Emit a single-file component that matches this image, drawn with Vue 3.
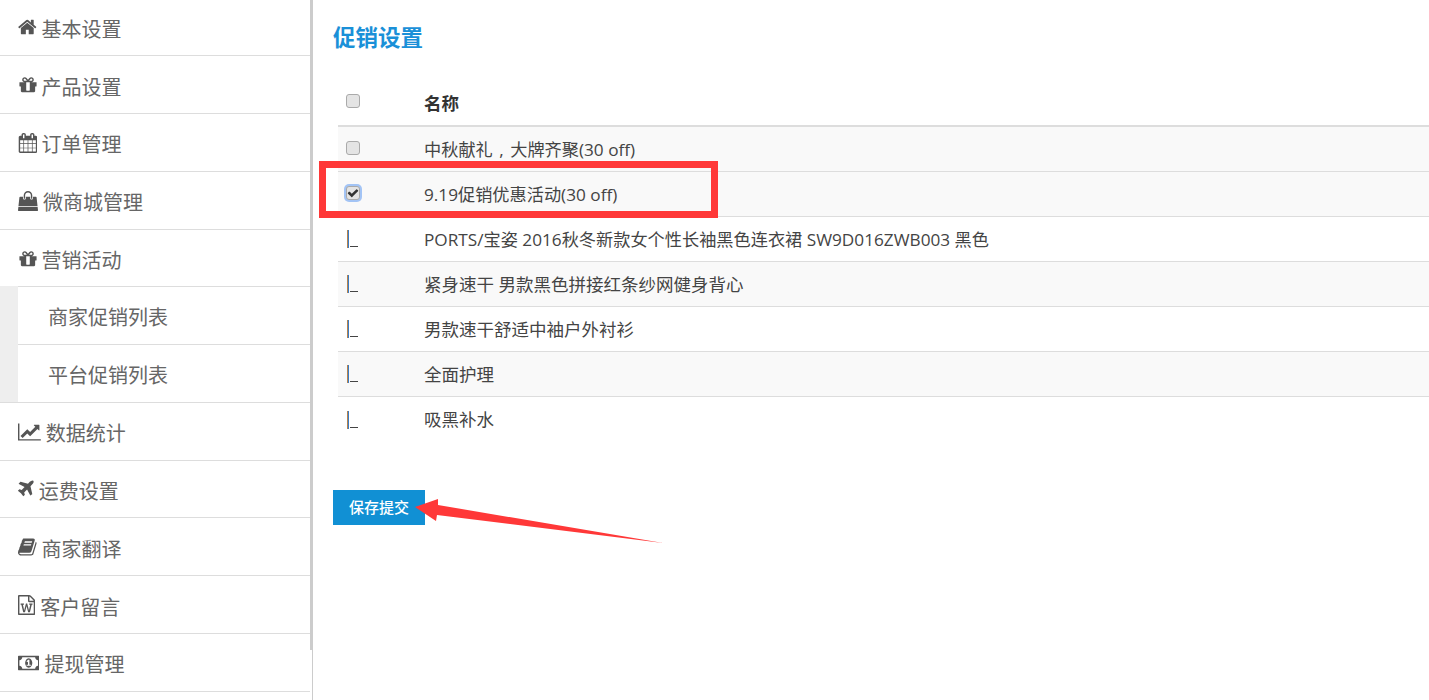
<template>
  <div class="page">
    <aside class="side">
      <div class="thumb"></div>
      <ul class="menu">
        <template v-for="item in menu" :key="item.name">
          <li class="row" :class="{ open: item.subs }">
            <svg class="ico" :width="item.w * 20 / 1792" height="20" :viewBox="`${item.x || 0} 0 ${item.w} 1792`" fill="currentColor"><path :d="icons[item.icon]" /></svg>
            <span class="label">{{ item.name }}</span>
          </li>
          <li v-if="item.subs" class="subs">
            <div v-for="s in item.subs" :key="s" class="sub">{{ s }}</div>
          </li>
        </template>
      </ul>
    </aside>

    <main class="main">
      <h3 class="title">促销设置</h3>
      <div class="table">
        <div class="thead">
          <div class="c1"><span class="box"></span></div>
          <div class="c2">名称</div>
        </div>
        <div v-for="r in rows" :key="r.name" class="tr" :class="{ odd: r.shade, han: r.han }">
          <div class="c1">
            <span v-if="r.type === 'box'" class="box"></span>
            <span v-else-if="r.type === 'checked'" class="box on">
              <svg width="12" height="12" viewBox="0 0 1792 1792" fill="#333"><path d="M1671 566q0 40-28 68l-724 724-136 136q-28 28-68 28t-68-28l-136-136-362-362q-28-28-28-68t28-68l136-136q28-28 68-28t68 28l294 295 656-657q28-28 68-28t68 28l136 136q28 28 28 68z" /></svg>
            </span>
            <span v-else class="broken"></span>
          </div>
          <div class="c2">{{ r.name }}<template v-if="r.tail"><span class="comma">,</span>{{ r.tail }}</template></div>
        </div>
      </div>
      <button class="save">保存提交</button>
    </main>

    <div class="mark"></div>
    <svg class="arrow" width="260" height="60" viewBox="0 0 260 60">
      <polygon points="2,17 25,9 25,15 250,53 24,25 23,31" fill="#ff3838" />
    </svg>
  </div>
</template>

<script setup>
const icons = {
  home: 'M1472 992v480q0 26-19 45t-45 19h-384v-384h-256v384h-384q-26 0-45-19t-19-45v-480q0-1 .5-3t.5-3l575-474 575 474q1 2 1 6zm223-69l-62 74q-8 9-21 11h-3q-13 0-21-7l-692-577-692 577q-12 8-24 7-13-2-21-11l-62-74q-8-10-7-23.5t11-21.5l719-599q32-26 76-26t76 26l244 204v-195q0-14 9-23t23-9h192q14 0 23 9t9 23v408l219 182q10 8 11 21.5t-7 23.5z',
  gift: 'M1056 1356v-716h-320v716q0 25 18 38.5t46 13.5h192q28 0 46-13.5t18-38.5zm-456-844h195l-126-161q-26-31-69-31-40 0-68 28t-28 68 28 68 68 28zm688-96q0-40-28-68t-68-28q-43 0-69 31l-125 161h194q40 0 68-28t28-68zm376 256v320q0 14-9 23t-23 9h-96v416q0 40-28 68t-68 28h-1088q-40 0-68-28t-28-68v-416h-96q-14 0-23-9t-9-23v-320q0-14 9-23t23-9h440q-93 0-158.5-65.5t-65.5-158.5 65.5-158.5 158.5-65.5q107 0 168 77l128 165 128-165q61-77 168-77 93 0 158.5 65.5t65.5 158.5-65.5 158.5-158.5 65.5h440q14 0 23 9t9 23z',
  calendar: 'M192 1664h288v-288h-288v288zm352 0h320v-288h-320v288zm-352-352h288v-320h-288v320zm352 0h320v-320h-320v320zm-352-384h288v-288h-288v288zm736 736h320v-288h-320v288zm-384-736h320v-288h-320v288zm768 736h288v-288h-288v288zm-384-352h320v-320h-320v320zm-352-864v-288q0-13-9.5-22.5t-22.5-9.5h-64q-13 0-22.5 9.5t-9.5 22.5v288q0 13 9.5 22.5t22.5 9.5h64q13 0 22.5-9.5t9.5-22.5zm736 864h288v-320h-288v320zm-384-384h320v-288h-320v288zm384 0h288v-288h-288v288zm32-480v-288q0-13-9.5-22.5t-22.5-9.5h-64q-13 0-22.5 9.5t-9.5 22.5v288q0 13 9.5 22.5t22.5 9.5h64q13 0 22.5-9.5t9.5-22.5zm384-64v1280q0 52-38 90t-90 38h-1408q-52 0-90-38t-38-90v-1280q0-52 38-90t90-38h128v-96q0-66 47-113t113-47h64q66 0 113 47t47 113v96h384v-96q0-66 47-113t113-47h64q66 0 113 47t47 113v96h128q52 0 90 38t38 90z',
  bag: 'M1757 1408l35 313q3 28-16 50-19 21-48 21h-1664q-29 0-48-21-19-22-16-50l35-313h1722zm-93-839l86 775h-1708l86-775q3-24 21-40.5t43-16.5h256v128q0 53 37.5 90.5t90.5 37.5 90.5-37.5 37.5-90.5v-128h384v128q0 53 37.5 90.5t90.5 37.5 90.5-37.5 37.5-90.5v-128h256q25 0 43 16.5t21 40.5zm-384-185v256q0 26-19 45t-45 19-45-19-19-45v-256q0-106-75-181t-181-75-181 75-75 181v256q0 26-19 45t-45 19-45-19-19-45v-256q0-159 112.5-271.5t271.5-112.5 271.5 112.5 112.5 271.5z',
  chart: 'M2048 1536v128h-2048v-1536h128v1408h1920zm-128-1248v435q0 21-19.5 29.5t-35.5-7.5l-121-121-633 633q-10 10-23 10t-23-10l-233-233-416 416-192-192 585-585q10-10 23-10t23 10l233 233 464-464-121-121q-16-16-7.5-35.5t29.5-19.5h435q14 0 23 9t9 23z',
  plane: 'M1376 160q44 52 12 148t-108 172l-161 161 160 696q5 19-12 33l-128 96q-7 6-19 6-4 0-7-1-15-3-21-16l-279-508-259 259 53 194q5 17-8 31l-96 96q-9 9-23 9h-2q-15-2-24-13l-189-252-252-189q-11-7-13-23-1-13 9-25l96-97q9-9 23-9 6 0 8 1l194 53 259-259-508-279q-14-8-17-24-2-16 9-27l128-128q14-13 30-8l665 159 160-160q76-76 172-108t148 12z',
  book: 'M1639 478q40 57 18 129l-275 906q-19 64-76.5 107.5t-122.5 43.5h-923q-77 0-148.5-53.5t-99.5-131.5q-24-67-2-127 0-4 3-27t4-37q1-8-3-21.5t-3-19.5q2-11 8-21t16.5-23.5 16.5-23.5q23-38 45-91.5t30-91.5q3-10 .5-30t-.5-28q3-11 17-28t17-23q21-36 42-92t25-90q1-9-2.5-32t.5-28q4-13 22-30.5t22-22.5q19-26 42.5-84.5t27.5-96.5q1-8-3-25.5t-2-26.5q2-8 9-18t18-23 17-21q8-12 16.5-30.5t15-35 16-36 19.5-32 26.5-23.5 36-11.5 47.5 5.5l-1 3q38-9 51-9h761q74 0 114 56t18 130l-274 906q-36 119-71.5 153.5t-128.5 34.5h-869q-27 0-38 15-11 16-1 43 24 70 144 70h923q29 0 56-15.5t35-41.5l300-987q7-22 5-57 38 15 59 43zm-1064 2q-4 13 2 22.5t20 9.5h608q13 0 25.5-9.5t16.5-22.5l21-64q4-13-2-22.5t-20-9.5h-608q-13 0-25.5 9.5t-16.5 22.5zm-83 256q-4 13 2 22.5t20 9.5h608q13 0 25.5-9.5t16.5-22.5l21-64q4-13-2-22.5t-20-9.5h-608q-13 0-25.5 9.5t-16.5 22.5z',
  word: 'M1468 380q28 28 48 76t20 88v1152q0 40-28 68t-68 28h-1344q-40 0-68-28t-28-68v-1600q0-40 28-68t68-28h896q40 0 88 20t76 48zm-444-244v376h376q-10-29-22-41l-313-313q-12-12-41-22zm384 1528v-1024h-416q-40 0-68-28t-28-68v-416h-768v1536h1280zm-1175-896v107h70l164 661h159l128-485q7-20 10-46 2-16 2-24h4l3 24q1 3 3.5 20t5.5 26l128 485h159l164-661h70v-107h-300v107h90l-99 438q-5 20-7 46l-2 21h-4q0-3-.5-6.5t-1.5-8-1-6.5q-1-5-4-21t-5-25l-144-545h-114l-144 545q-2 9-4.5 24.5t-3.5 21.5l-4 21h-4l-2-21q-2-26-7-46l-99-438h90v-107h-300z',
  money: 'M768 1152h384v-96h-128v-448h-114l-148 137 77 80q42-37 55-57h2v288h-128v96zm512-256q0 70-21 142t-59.5 134-101.5 101-138 39-138-39-101.5-101-59.5-134-21-142 21-142 59.5-134 101.5-101 138-39 138 39 101.5 101 59.5 134 21 142zm512 256v-512q-106 0-181-75t-75-181h-1152q0 106-75 181t-181 75v512q106 0 181 75t75 181h1152q0-106 75-181t181-75zm128-832v1152q0 26-19 45t-45 19h-1792q-26 0-45-19t-19-45v-1152q0-26 19-45t45-19h1792q26 0 45 19t19 45z'
}

const menu = [
  { name: '基本设置', icon: 'home', w: 1664, x: 64 },
  { name: '产品设置', icon: 'gift', w: 1664 },
  { name: '订单管理', icon: 'calendar', w: 1664 },
  { name: '微商城管理', icon: 'bag', w: 1792 },
  { name: '营销活动', icon: 'gift', w: 1664, subs: ['商家促销列表', '平台促销列表'] },
  { name: '数据统计', icon: 'chart', w: 2048 },
  { name: '运费设置', icon: 'plane', w: 1408 },
  { name: '商家翻译', icon: 'book', w: 1664 },
  { name: '客户留言', icon: 'word', w: 1536 },
  { name: '提现管理', icon: 'money', w: 1920 }
]

const rows = [
  { name: '中秋献礼', tail: '大牌齐聚(30 off)', type: 'box', shade: true },
  { name: '9.19促销优惠活动(30 off)', type: 'checked', shade: true },
  { name: 'PORTS/宝姿 2016秋冬新款女个性长袖黑色连衣裙 SW9D016ZWB003 黑色', type: 'broken' },
  { name: '紧身速干 男款黑色拼接红条纱网健身背心', type: 'broken', shade: true, han: true },
  { name: '男款速干舒适中袖户外衬衫', type: 'broken', han: true },
  { name: '全面护理', type: 'broken', shade: true, han: true },
  { name: '吸黑补水', type: 'broken', han: true }
]
</script>

<style scoped>
.page {
  position: relative;
  display: flex;
  height: 700px;
  overflow: hidden;
  background: #fff;
  color: #444;
  font-family: "Open Sans", "Noto Sans CJK SC", sans-serif;
}

.side {
  position: relative;
  flex: 0 0 313px;
  box-sizing: border-box;
  border-right: 1px solid #ccc;
}

.thumb {
  position: absolute;
  top: 0;
  right: -1px;
  width: 3px;
  height: 650px;
  background: #ccc;
}

.menu {
  width: 310px;
  margin: -1.6px 0 0;
  padding: 0;
  list-style: none;
}

.row {
  display: flex;
  align-items: center;
  box-sizing: border-box;
  height: 57.8px;
  padding: 1px 0 0 18px;
  border-bottom: 1px solid #ddd;
  font-size: 20px;
  color: #666;
}

.row.open {
  border-bottom: 0;
}

.ico {
  flex: none;
  margin-right: 5px;
  color: #555;
}

.label {
  padding-top: 2px;
}

.subs {
  margin-top: -1px;
  padding-left: 18px;
  background: #eee;
  border-bottom: 1px solid #ddd;
}

.sub {
  box-sizing: border-box;
  height: 57.8px;
  padding: 2px 0 0 30px;
  border-top: 1px solid #ddd;
  background: #fff;
  font-size: 20px;
  line-height: 58px;
  color: #666;
}

.sub:last-child {
  height: 57.6px;
}

.main {
  flex: 1;
  min-width: 0;
  padding-left: 20px;
}

.title {
  margin: 24px 0 0;
  font-size: 22.5px;
  line-height: 28px;
  font-weight: 700;
  color: #1a90d8;
}

.table {
  margin: 25px 0 0 5px;
}

.thead,
.tr {
  display: flex;
  align-items: center;
  box-sizing: border-box;
}

.thead {
  height: 50px;
  border-bottom: 2px solid #ddd;
  font-size: 17.5px;
  font-weight: 700;
  color: #333;
}

.thead .c2 {
  margin-top: 2px;
}

.thead .box {
  margin-top: 0;
}

.tr {
  height: 45px;
  border-bottom: 1px solid #ddd;
  font-size: 17.2px;
}

.tr.han {
  font-size: 17.5px;
}

.tr:last-child {
  border-bottom: 0;
}

.tr.odd {
  background: #f9f9f9;
}

.c1 {
  display: flex;
  flex: 0 0 86px;
  padding-left: 8px;
  box-sizing: border-box;
}

.c2 {
  flex: 1;
  margin-top: -2px;
  white-space: nowrap;
}

.comma {
  padding: 0 6.5px;
}

.box {
  display: flex;
  align-items: center;
  justify-content: center;
  box-sizing: border-box;
  width: 14px;
  height: 14px;
  margin-top: -3px;
  border: 1px solid #aaa;
  border-radius: 3px;
  background: #e4e4e4;
}

.box.on {
  box-shadow: 0 0 0 2px #a3c4f5;
}

/* collapsed file input, reads as a bar and a low dash */
.broken {
  position: relative;
  width: 2px;
  height: 18px;
  margin: 0 0 0 1px;
  background: linear-gradient(to right, #b5834f 50%, #3b7cc4 50%);
}

.broken::after {
  content: "";
  position: absolute;
  left: 3px;
  bottom: 1px;
  width: 8px;
  height: 1px;
  background: #444;
}

.save {
  display: block;
  width: 92px;
  height: 35px;
  margin-top: 48px;
  padding: 0 0 2px;
  border: 0;
  background: #1190d4;
  color: #fff;
  font-family: inherit;
  font-size: 15px;
  font-weight: 500;
}

.mark {
  position: absolute;
  left: 319px;
  top: 161px;
  width: 399px;
  height: 57px;
  box-sizing: border-box;
  border: 7px solid #ff3838;
}

.arrow {
  position: absolute;
  left: 413px;
  top: 490px;
}
</style>

<style>
html,
body {
  overflow: hidden;
}
</style>
